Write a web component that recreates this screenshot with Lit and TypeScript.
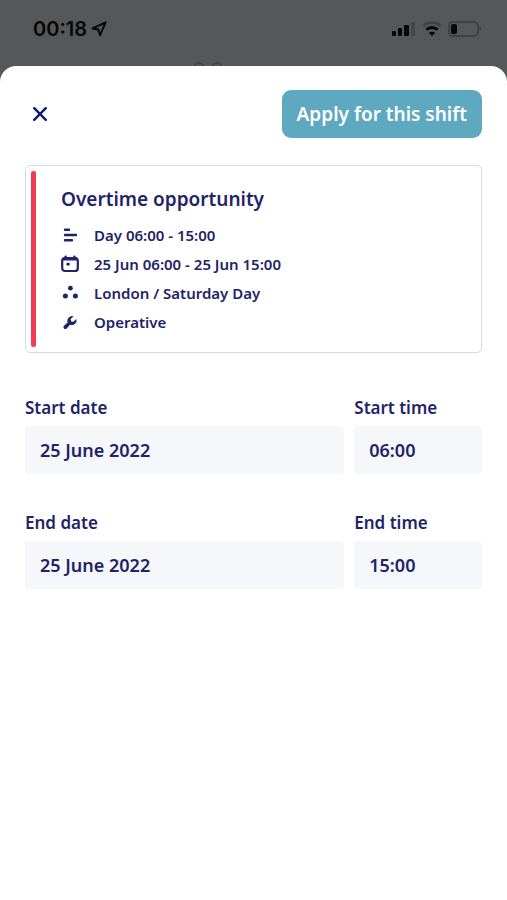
import { LitElement, html, css, svg } from "lit";
import { customElement } from "lit/decorators.js";

const icons = {
  shift: svg`<path d="M4 3.8h4M4 9h11M4 14.2h7" fill="none" stroke="currentColor" stroke-width="2.4" stroke-linecap="round"/>`,
  calendar: svg`<rect x="1.2" y="3" width="15.6" height="13" rx="2.8" fill="none" stroke="currentColor" stroke-width="2.2"/><path d="M1 5.4C1 3 2 2.4 4 2.4h10c2 0 3 .6 3 3z" fill="currentColor"/><path d="M4.6 1.6v2M13.4 1.6v2" stroke="currentColor" stroke-width="2.4" stroke-linecap="round"/><rect x="5.4" y="7.8" width="3.4" height="2.8" rx="1" fill="currentColor"/>`,
  team: svg`<circle cx="9.4" cy="4.2" r="2.4" fill="currentColor"/><circle cx="4.4" cy="12" r="2.5" fill="currentColor"/><circle cx="14.4" cy="12" r="2.5" fill="currentColor"/>`,
  role: svg`<path d="M12.6 3.2a4.8 4.8 0 0 0-6 6.2l-3.6 3.3a1.9 1.9 0 0 0 2.7 2.7l3.4-3.6a4.8 4.8 0 0 0 6.3-5.8l-3 2.8-2.2-.4-.5-2.3z" fill="currentColor"/>`,
};

const details = [
  { icon: icons.shift, text: "Day 06:00 - 15:00" },
  { icon: icons.calendar, text: "25 Jun 06:00 - 25 Jun 15:00" },
  { icon: icons.team, text: "London / Saturday Day" },
  { icon: icons.role, text: "Operative" },
];

const fields = [
  { id: "start-date", label: "Start date", value: "25 June 2022" },
  { id: "start-time", label: "Start time", value: "06:00" },
  { id: "end-date", label: "End date", value: "25 June 2022" },
  { id: "end-time", label: "End time", value: "15:00" },
];

@customElement("app-root")
export class AppRoot extends LitElement {
  static styles = css`
    :host {
      display: flex;
      flex-direction: column;
      min-height: 100vh;
      background: #565759;
      color: #1f2468;
      font-family: "Noto Sans", "Open Sans", sans-serif;
      font-weight: 600;
    }
    * {
      box-sizing: border-box;
    }
    svg {
      display: block;
      flex: none;
    }
    .status {
      display: flex;
      align-items: center;
      justify-content: space-between;
      height: 58px;
      padding: 0 25px 0 33px;
      color: #060607;
      font: 600 20px/24px "Liberation Sans", sans-serif;
      font-family: Inter, sans-serif;
    }
    .clock,
    .signals {
      display: flex;
      align-items: center;
      gap: 6px;
    }
    .clock {
      gap: 4px;
    }
    .peek {
      display: flex;
      justify-content: center;
      height: 8px;
      padding-right: 92px;
    }
    .sheet {
      flex: 1;
      padding: 24px 25px;
      border-radius: 16px 16px 0 0;
      background: #fff;
    }
    .actions {
      display: flex;
      align-items: center;
      justify-content: space-between;
    }
    .close {
      padding: 8px;
      border: 0;
      background: none;
      color: #121a6e;
    }
    .apply {
      height: 48px;
      padding: 0 15px;
      border: 0;
      border-radius: 9px;
      background: #5ea9c0;
      color: #fff;
      font: inherit;
      font-size: 19px;
    }
    .card {
      display: flex;
      gap: 25px;
      margin-top: 27px;
      padding: 5px;
      border: 1px solid #d5d9ee;
      border-radius: 5px;
    }
    .accent {
      width: 5px;
      border-radius: 2px;
      background: #f43b55;
    }
    .summary {
      padding: 14px 0 13px;
    }
    h1 {
      margin: 0 0 10px;
      font-size: 19px;
      line-height: 28px;
      font-weight: 600;
    }
    ul {
      display: grid;
      gap: 5px;
      margin: 0;
      padding: 0;
      list-style: none;
      font-size: 15px;
      line-height: 24px;
    }
    li {
      display: flex;
      align-items: center;
      gap: 15px;
    }
    form {
      display: grid;
      grid-template-columns: 5fr 2fr;
      gap: 37px 10px;
      margin-top: 43px;
    }
    .field {
      display: grid;
      gap: 6px;
      min-width: 0;
    }
    label {
      font-size: 17px;
      line-height: 24px;
    }
    input {
      width: 100%;
      height: 48px;
      padding: 0 15px;
      border: 0;
      border-radius: 4px;
      background: #f5f7fb;
      color: inherit;
      font: inherit;
      font-size: 18px;
    }
  `;

  render() {
    return html`
      <header class="status">
        <div class="clock">
          <span>00:18</span>
          <svg width="16" height="16" viewBox="0 0 16 16" fill="none" stroke="currentColor" stroke-width="2" stroke-linejoin="round">
            <path d="M14.5 1.5 1.5 7.4l5.8 1.2 1.8 5.6z" />
          </svg>
        </div>
        <div class="signals">
          <svg width="24" height="16" viewBox="0 0 24 16" fill="currentColor">
            <rect x="0" y="10" width="4" height="5" rx="1" />
            <rect x="6" y="7" width="4" height="8" rx="1" />
            <rect x="12" y="4" width="5" height="11" rx="1" />
            <rect x="19" y="1" width="4" height="14" rx="1" fill="#454648" />
          </svg>
          <svg width="20" height="16" viewBox="0 0 20 16" fill="none" stroke-width="2.6">
            <path d="M1.5 5a12 12 0 0 1 17 0" stroke="#414244" />
            <path d="M4.4 8.8a8 8 0 0 1 11.2 0" stroke="currentColor" stroke-width="3" />
            <path d="M10 15 7 12a4.2 4.2 0 0 1 6 0z" fill="currentColor" />
          </svg>
          <svg width="34" height="16" viewBox="0 0 34 16">
            <rect x="1" y="1" width="29" height="14" rx="4" fill="none" stroke="#3b3c3e" stroke-width="1.6" />
            <rect x="3" y="3" width="6" height="10" rx="2" fill="currentColor" />
            <path d="M31.5 5.5v5c2-1 2-4 0-5z" fill="#3b3c3e" />
          </svg>
        </div>
      </header>
      <div class="peek">
        <svg width="30" height="8" viewBox="0 0 30 8" fill="none" stroke="#3f4044" stroke-width="1.4">
          <circle cx="6" cy="10" r="5" />
          <circle cx="24" cy="10" r="5" />
        </svg>
      </div>
      <main class="sheet">
        <div class="actions">
          <button class="close" aria-label="Close">
            <svg width="14" height="14" viewBox="0 0 14 14" stroke="currentColor" stroke-width="2.4" stroke-linecap="round">
              <path d="m1.2 1.2 11.6 11.6M12.8 1.2 1.2 12.8" />
            </svg>
          </button>
          <button class="apply">Apply for this shift</button>
        </div>
        <section class="card">
          <div class="accent"></div>
          <div class="summary">
            <h1>Overtime opportunity</h1>
            <ul>
              ${details.map(
                (d) => html`<li>
                  <svg width="18" height="18" viewBox="0 0 18 18" aria-hidden="true">${d.icon}</svg>
                  <span>${d.text}</span>
                </li>`
              )}
            </ul>
          </div>
        </section>
        <form>
          ${fields.map(
            (f) => html`<div class="field">
              <label for=${f.id}>${f.label}</label>
              <input id=${f.id} type="text" readonly .value=${f.value} />
            </div>`
          )}
        </form>
      </main>
    `;
  }
}
